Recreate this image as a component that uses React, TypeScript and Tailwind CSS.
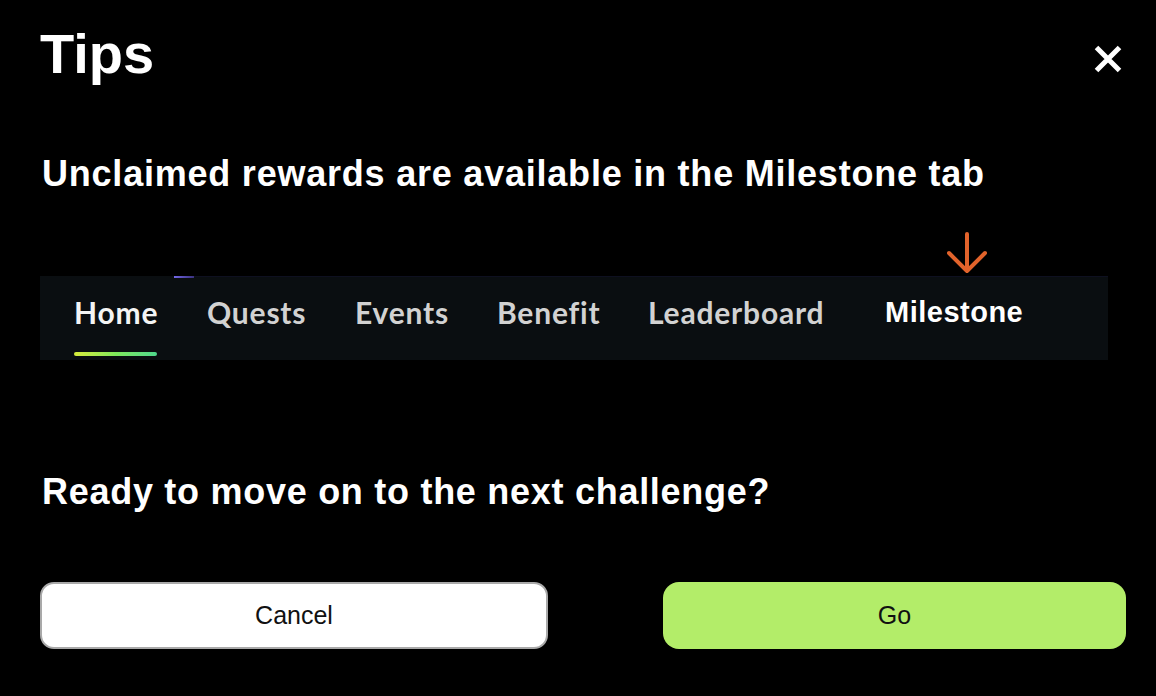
import React from "react";

const tabs = [
  { label: "Home", w: "w-[133px]", active: true },
  { label: "Quests", w: "w-[148px]" },
  { label: "Events", w: "w-[142px]" },
  { label: "Benefit", w: "w-[151px]" },
  { label: "Leaderboard", w: "w-[237px]" },
];

export default function App() {
  return (
    <div
      className="w-[1156px] h-[696px] bg-black text-white overflow-hidden px-10 flex flex-col"
      style={{ fontFamily: '"Liberation Sans", Arial, sans-serif' }}
    >
      {/* Header */}
      <div className="flex items-start justify-between pt-[26px]">
        <h1 className="text-[56px] leading-none font-bold">Tips</h1>
        <button className="mt-[18px] mr-[-7px]" aria-label="Close">
          <svg width="30" height="30" viewBox="0 0 30 30">
            <path d="M3.5 3.5 L26.5 26.5 M26.5 3.5 L3.5 26.5" stroke="white" strokeWidth="5" />
          </svg>
        </button>
      </div>

      <p className="mt-[74px] text-[36px] leading-none font-bold ml-[2px] tracking-[0.78px]">
        Unclaimed rewards are available in the Milestone tab
      </p>

      {/* Tab bar screenshot */}
      <div className="relative mt-[84px] h-[84px] w-[1068px] bg-[#0a0e11] pl-[34px] flex items-start shrink-0">
        <div className="absolute top-0 left-[134px] w-[20px] h-[2px] bg-gradient-to-r from-[#7468e8] to-[#3a3280]" />
        <div className="absolute top-0 left-[154px] right-0 h-[1px] bg-[#0e1020]" />
        {tabs.map((t) => (
          <div key={t.label} className={`${t.w} shrink-0 pt-[21px] relative`}>
            <span
              className={`inline-block text-[30px] leading-none font-bold tracking-[0.8px] ${
                t.active ? "text-[#f4f4f4]" : "text-[#d2d2d2]"
              }`}
              style={{ fontFamily: "Lato, sans-serif" }}
            >
              {t.label}
              {t.active && (
                <span className="absolute left-0 top-[76px] h-[4px] w-[83px] rounded-full bg-gradient-to-r from-[#d7ec3a] via-[#7ee85a] to-[#4ed88c]" />
              )}
            </span>
          </div>
        ))}
        <div className="relative shrink-0 pt-[22px]">
          <span className="text-[29px] leading-none font-bold text-white tracking-[0.5px]">Milestone</span>
          <svg
            className="absolute left-[62px] top-[-44px]"
            width="40"
            height="42"
            viewBox="0 0 40 42"
          >
            <path
              d="M20 2 L20 39 M2 21 L20 39 L38 21"
              stroke="#e2632b"
              strokeWidth="4"
              fill="none"
              strokeLinecap="round"
              strokeLinejoin="round"
            />
          </svg>
        </div>
      </div>

      <p className="mt-[114px] text-[36px] leading-none font-bold ml-[2px] tracking-[0.72px]">
        Ready to move on to the next challenge?
      </p>

      <div className="mt-[72px] flex justify-between w-[1086px]">
        <button className="w-[508px] h-[67px] rounded-[14px] bg-white border-2 border-[#a9a9a9] text-[#111] text-[25px]">
          Cancel
        </button>
        <button className="w-[463px] h-[67px] rounded-[16px] bg-[#b3ed69] text-[#111] text-[25px]">
          Go
        </button>
      </div>
    </div>
  );
}
